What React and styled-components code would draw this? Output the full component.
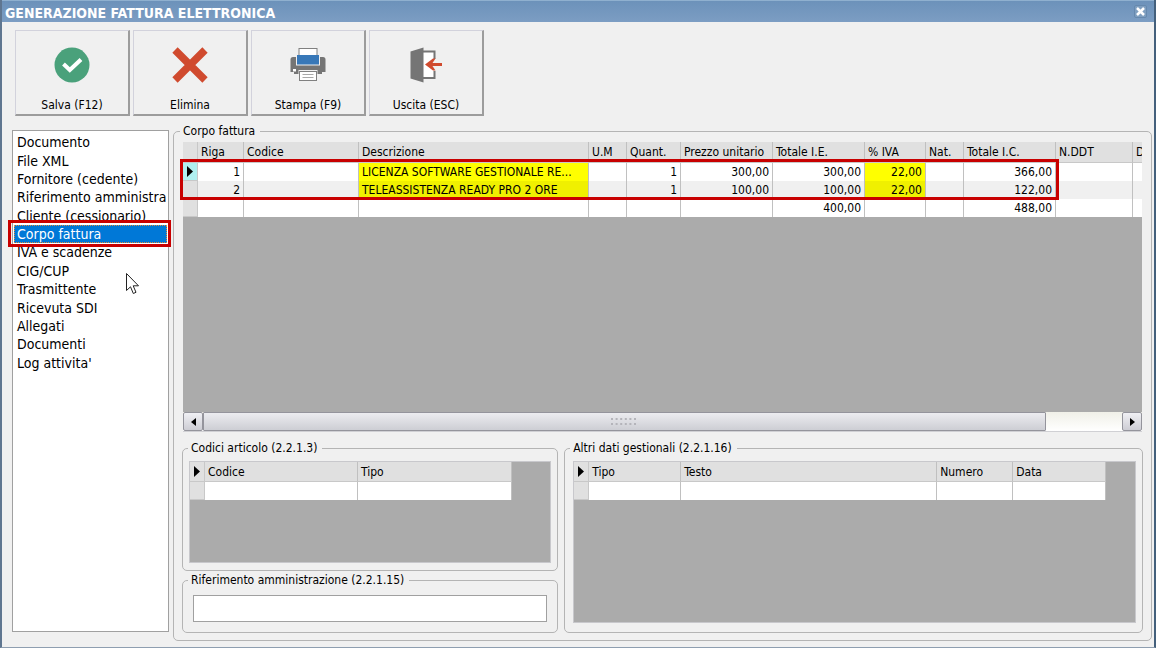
import React, { useState } from "react";
import styled, { createGlobalStyle } from "styled-components";

/* Start page styling */
const GlobalStyle = createGlobalStyle`
  * {
    box-sizing: border-box;
  }

  body {
    margin: 0;
    background-color: #f0f0f0;
    color: #000;
    font-family: "DejaVu Sans Condensed", "Noto Sans", sans-serif;
    font-size: 12px;
    line-height: 18px;
  }

  button,
  input {
    font: inherit;
    color: inherit;
  }
`;

const Window = styled.div`
  display: flex;
  flex-direction: column;
  min-height: 100vh;
  border-left: 2px solid #5f7690;
  border-right: 2px solid #44607c;
  border-bottom: 1px solid #8e9eb0;
`;

const TitleBar = styled.header`
  display: flex;
  align-items: center;
  justify-content: space-between;
  height: 22px;
  padding: 3px 7px 0 3px;
  border-top: 1px solid #8fb0cf;
  background: linear-gradient(#6c92ba, #7c9dc3);
  color: #fff;
`;

const Title = styled.h1`
  margin: 0;
  font-size: 14px;
  line-height: 18px;
  font-weight: bold;
`;

const CloseButton = styled.button`
  display: flex;
  align-items: center;
  justify-content: center;
  width: 13px;
  height: 13px;
  margin-bottom: 4px;
  padding: 0;
  border: 1px solid #6689ae;
  border-radius: 2px;
  background-color: #7f9fc0;
`;

const Toolbar = styled.div`
  display: flex;
  gap: 3px;
  padding: 8px 13px 6px;
`;

const ToolButton = styled.button`
  display: flex;
  flex-direction: column;
  align-items: center;
  gap: 13px;
  width: 115px;
  height: 86px;
  padding: 16px 0 0;
  border: solid;
  border-width: 1px 2px 2px 1px;
  border-color: #d2d2dc #9c9c9c #9c9c9c #d2d2dc;
  background-color: #f0f0f0;
`;

const Content = styled.div`
  flex: 1;
  display: flex;
  gap: 4px;
  padding: 0 2px 6px 10px;
`;

const SideNav = styled.nav`
  flex: none;
  width: 157px;
  margin: 8px 0 9px;
  padding: 2px 1px;
  border: 1px solid #a0a0a0;
  background-color: #fff;
`;

const SideList = styled.ul`
  display: grid;
  grid-template-columns: minmax(0, 1fr);
  grid-auto-rows: 1fr;
  height: 239px;
  margin: 0;
  padding: 0;
  list-style: none;
`;

const SideItem = styled.li`
  position: relative;
`;

const SideButton = styled.button`
  display: block;
  width: 100%;
  height: 100%;
  padding: 0 0 0 2px;
  overflow: hidden;
  border: 1px dotted ${props => (props.$active ? "#e08a3c" : "transparent")};
  background-color: ${props => (props.$active ? "#0078d7" : "transparent")};
  color: ${props => (props.$active ? "#fff" : "#000")};
  font-size: 14px;
  line-height: 16px;
  text-align: left;
  white-space: nowrap;
`;

const ItemHighlight = styled.span`
  position: absolute;
  inset: -5px -4px -4px -6px;
  z-index: 1;
  border: 3px solid #c80000;
  pointer-events: none;
`;

const Group = styled.fieldset`
  display: flex;
  flex-direction: column;
  min-width: 0;
  margin: 0;
  padding: ${props => props.$padding};
  border: 1px solid #b4b4b4;
  border-radius: 5px;
`;

const MainGroup = styled(Group)`
  flex: 1;
`;

const GroupTitle = styled.legend`
  margin-left: ${props => props.$shift || "-3px"};
  padding: 1px 5px 0 3px;
  line-height: 17px;
`;

const GridArea = styled.div`
  position: relative;
  flex: 1;
  display: flex;
  flex-direction: column;
`;

const GridView = styled.div`
  flex: 1;
  min-height: ${props => props.$minHeight || "100px"};
  overflow: hidden;
  border: ${props => (props.$framed ? "1px solid #c8c8cc" : "none")};
  background-color: #ababab;
`;

const Table = styled.table`
  width: ${props => props.$width}px;
  height: ${props => props.$height}px;
  border-collapse: separate;
  border-spacing: 0;
  table-layout: fixed;
`;

const HeadCell = styled.th`
  padding: 1px 0 0 3px;
  border-right: 1px solid #c0c0c0;
  border-bottom: 1px solid #c8c8c8;
  background-color: #e0e0e0;
  font-weight: normal;
  line-height: 17px;
  text-align: left;
  white-space: nowrap;
`;

const Cell = styled.td`
  height: 18px;
  padding: 0 3px;
  overflow: hidden;
  border-right: 1px solid #c0c0c0;
  background-color: ${props => props.$color || "#fff"};
  line-height: 18px;
  text-align: ${props => (props.$number ? "right" : "left")};
  text-overflow: ellipsis;
  white-space: nowrap;
`;

const MarkCell = styled.td`
  padding: 0 0 0 4px;
  border-right: 1px solid #c8c8c8;
  border-bottom: 1px solid #c8c8c8;
  background-color: ${props => (props.$current ? "#b0f0f0" : "#e0e0e0")};
  line-height: 0;
`;

const RowsHighlight = styled.div`
  position: absolute;
  top: 17px;
  left: -3px;
  width: 879px;
  height: 41px;
  border: 3px solid #c80000;
  pointer-events: none;
`;

const ScrollBar = styled.div`
  display: flex;
  height: 20px;
  border-bottom: 1px solid #d0d0d4;
  background: linear-gradient(#f0f0e8, #fff);
`;

const ScrollButton = styled.button`
  display: flex;
  align-items: center;
  justify-content: center;
  width: 20px;
  padding: 0;
  border: 1px solid #94949c;
  border-radius: 2px;
  background: linear-gradient(#f0f0f4, #cdcdd4);
`;

const ScrollThumb = styled.div`
  flex: 11;
  display: flex;
  align-items: center;
  justify-content: center;
  border: 1px solid #94949c;
  border-radius: 1px;
  background: linear-gradient(#ececf0, #cdced4);
`;

const ScrollSpace = styled.div`
  flex: 1;
`;

const Details = styled.div`
  display: grid;
  grid-template-columns: minmax(0, 13fr) minmax(0, 20fr);
  gap: 6px;
  margin: 7px -1px 0;
`;

const DetailsColumn = styled.div`
  display: flex;
  flex-direction: column;
`;

const TextField = styled.input`
  height: 27px;
  padding: 0 4px;
  border: 1px solid #a0a0a0;
  background-color: #fff;
`;

const Pointer = styled.svg`
  position: absolute;
  top: 272px;
  left: 125px;
  pointer-events: none;
`;
/* End page styling */

const sections = [
  "Documento",
  "File XML",
  "Fornitore (cedente)",
  "Riferimento amministrazione",
  "Cliente (cessionario)",
  "Corpo fattura",
  "IVA e scadenze",
  "CIG/CUP",
  "Trasmittente",
  "Ricevuta SDI",
  "Allegati",
  "Documenti",
  "Log attivita'"
];

const invoiceColumns = [
  { title: "Riga", width: 46, number: true },
  { title: "Codice", width: 115 },
  { title: "Descrizione", width: 230, marked: true },
  { title: "U.M", width: 38 },
  { title: "Quant.", width: 54, number: true },
  { title: "Prezzo unitario", width: 92, number: true },
  { title: "Totale I.E.", width: 92, number: true },
  { title: "% IVA", width: 61, number: true, marked: true },
  { title: "Nat.", width: 38 },
  { title: "Totale I.C.", width: 92, number: true },
  { title: "N.DDT", width: 77 },
  { title: "D", width: 77 }
];

const invoiceRows = [
  ["1", "", "LICENZA SOFTWARE GESTIONALE RE...", "", "1", "300,00", "300,00", "22,00", "", "366,00", "", ""],
  ["2", "", "TELEASSISTENZA READY PRO 2 ORE", "", "1", "100,00", "100,00", "22,00", "", "122,00", "", ""]
];

const invoiceTotals = ["", "", "", "", "", "", "400,00", "", "", "488,00", "", ""];

const codeColumns = [
  { title: "Codice", width: 153 },
  { title: "Tipo", width: 154 }
];

const extraColumns = [
  { title: "Tipo", width: 92 },
  { title: "Testo", width: 256 },
  { title: "Numero", width: 76 },
  { title: "Data", width: 93 }
];

const SaveIcon = () => (
  <svg width="36" height="36" viewBox="0 0 36 36">
    <circle cx="18" cy="18" r="17.5" fill="#4aa17b" />
    <path d="M9.5 17 L15.8 23 L27 12.5" fill="none" stroke="#fff" strokeWidth="4" />
  </svg>
);

const DeleteIcon = () => (
  <svg width="36" height="36" viewBox="0 0 36 36">
    <path d="M3 3 L33 33 M33 3 L3 33" stroke="#d04a2e" strokeWidth="7.5" />
  </svg>
);

const PrintIcon = () => (
  <svg width="36" height="36" viewBox="0 0 36 36">
    <path d="M3 10 H33 Q35.500 10 35.500 12.500 V25 H32 V27 H4 V25 H0.500 V12.500 Q0.500 10 3 10 Z" fill="#757575" />
    <rect x="9" y="1.500" width="18" height="12" fill="#fff" stroke="#808080" />
    <rect x="6" y="8" width="24" height="10.500" fill="#f0f0f0" />
    <rect x="7" y="8" width="22" height="9.500" fill="#3878b8" />
    <rect x="3" y="22" width="3" height="2.500" fill="#fff" />
    <rect x="8.500" y="23" width="19" height="11" fill="#f0f0f0" />
    <rect x="9.500" y="24.500" width="17" height="9" fill="#fff" stroke="#808080" />
    <path d="M12.500 27.500 H23.500 M12.500 30.500 H23.500" stroke="#a8a8a8" />
  </svg>
);

const ExitIcon = () => (
  <svg width="36" height="36" viewBox="0 0 36 36">
    <path d="M15 4.500 H26.500 V12 M26.500 24 V31 H15" fill="#fff" stroke="#757575" strokeWidth="2" />
    <rect x="15" y="6" width="10" height="24" fill="#fff" />
    <path d="M2.500 4.500 L15.500 0.500 V35.500 L2.500 31.500 Z" fill="#757575" />
    <path d="M34 17.500 H20" fill="none" stroke="#d04a2e" strokeWidth="3" />
    <path d="M17 17.500 L25 11.500 H27.500 L23.500 17.500 L27.500 23.500 H25 Z" fill="#d04a2e" />
  </svg>
);

const actions = [
  { label: "Salva (F12)", Icon: SaveIcon },
  { label: "Elimina", Icon: DeleteIcon },
  { label: "Stampa (F9)", Icon: PrintIcon },
  { label: "Uscita (ESC)", Icon: ExitIcon }
];

const RowMarker = () => (
  <svg width="6" height="11" viewBox="0 0 6 11">
    <path d="M0 0 L6 5.500 L0 11 Z" fill="#000" />
  </svg>
);

const DetailTable = ({ columns }) => (
  <Table
    $width={columns.reduce((sum, column) => sum + column.width, 15)}
    $height={38}
  >
    <colgroup>
      <col width="15" />
      {columns.map(column => (
        <col key={column.title} width={column.width} />
      ))}
    </colgroup>
    <tbody>
      <tr>
        <MarkCell>
          <RowMarker />
        </MarkCell>
        {columns.map(column => (
          <HeadCell key={column.title} scope="col">
            {column.title}
          </HeadCell>
        ))}
      </tr>
      <tr>
        <MarkCell />
        {columns.map(column => (
          <Cell key={column.title} />
        ))}
      </tr>
    </tbody>
  </Table>
);

const InvoiceTable = () => (
  <Table
    $width={invoiceColumns.reduce((sum, column) => sum + column.width, 15)}
    $height={75}
  >
    <colgroup>
      <col width="15" />
      {invoiceColumns.map(column => (
        <col key={column.title} width={column.width} />
      ))}
    </colgroup>
    <tbody>
      <tr>
        <MarkCell />
        {invoiceColumns.map(column => (
          <HeadCell key={column.title} scope="col">
            {column.title}
          </HeadCell>
        ))}
      </tr>
      {invoiceRows.map((row, idx) => {
        let rowColor = idx % 2 === 0 ? "#fff" : "#f0f0f0";
        let markedColor = idx % 2 === 0 ? "#ff0" : "#f0f000";
        return (
          <tr key={"row-" + idx}>
            <MarkCell $current={idx === 0}>
              {idx === 0 && <RowMarker />}
            </MarkCell>
            {row.map((value, col) => (
              <Cell
                key={invoiceColumns[col].title}
                $number={invoiceColumns[col].number}
                $color={invoiceColumns[col].marked ? markedColor : rowColor}
              >
                {value}
              </Cell>
            ))}
          </tr>
        );
      })}
      <tr>
        <MarkCell />
        {invoiceTotals.map((value, col) => (
          <Cell key={invoiceColumns[col].title} $number>
            {value}
          </Cell>
        ))}
      </tr>
    </tbody>
  </Table>
);

const App = () => {
  const [section, setSection] = useState("Corpo fattura");
  const [reference, setReference] = useState("");

  return (
    <Window>
      <GlobalStyle />
      <TitleBar>
        <Title>GENERAZIONE FATTURA ELETTRONICA</Title>
        <CloseButton aria-label="Chiudi">
          <svg width="9" height="9" viewBox="0 0 9 9">
            <path d="M1 1 L8 8 M8 1 L1 8" stroke="#fff" strokeWidth="2.500" />
          </svg>
        </CloseButton>
      </TitleBar>

      <Toolbar>
        {actions.map(({ label, Icon }) => (
          <ToolButton key={label}>
            <Icon />
            {label}
          </ToolButton>
        ))}
      </Toolbar>

      <Content>
        <SideNav>
          <SideList>
            {sections.map(name => (
              <SideItem key={name}>
                <SideButton
                  $active={name === section}
                  onClick={() => setSection(name)}
                >
                  {name}
                </SideButton>
                {name === section && <ItemHighlight />}
              </SideItem>
            ))}
          </SideList>
        </SideNav>

        <MainGroup $padding="2px 9px 7px">
          <GroupTitle>Corpo fattura</GroupTitle>
          <GridArea>
            <GridView $minHeight="200px">
              <InvoiceTable />
            </GridView>
            <RowsHighlight />
            <ScrollBar>
              <ScrollButton aria-label="Scorri a sinistra">
                <svg width="5" height="8" viewBox="0 0 5 8">
                  <path d="M5 0 L0 4 L5 8 Z" fill="#000" />
                </svg>
              </ScrollButton>
              <ScrollThumb>
                <svg width="26" height="8" viewBox="0 0 26 8">
                  <path d="M0 1 H26 M0 6 H26" stroke="#b4b4ba" strokeWidth="2" strokeDasharray="2 2.600" />
                </svg>
              </ScrollThumb>
              <ScrollSpace />
              <ScrollButton aria-label="Scorri a destra">
                <svg width="5" height="8" viewBox="0 0 5 8">
                  <path d="M0 0 L5 4 L0 8 Z" fill="#000" />
                </svg>
              </ScrollButton>
            </ScrollBar>
          </GridArea>

          <Details>
            <DetailsColumn>
              <Group $padding="4px 6px 7px">
                <GroupTitle $shift="-1px">Codici articolo (2.2.1.3)</GroupTitle>
                <GridView $framed $minHeight="102px">
                  <DetailTable columns={codeColumns} />
                </GridView>
              </Group>
              <Group $padding="6px 10px 10px">
                <GroupTitle $shift="-5px">
                  <label htmlFor="reference">
                    Riferimento amministrazione (2.2.1.15)
                  </label>
                </GroupTitle>
                <TextField
                  id="reference"
                  type="text"
                  value={reference}
                  onChange={event => setReference(event.target.value)}
                />
              </Group>
            </DetailsColumn>
            <Group $padding="4px 6px 9px 8px">
              <GroupTitle>Altri dati gestionali (2.2.1.16)</GroupTitle>
              <GridView $framed>
                <DetailTable columns={extraColumns} />
              </GridView>
            </Group>
          </Details>
        </MainGroup>
      </Content>

      {/* mouse pointer resting over the section list */}
      <Pointer width="15" height="24" viewBox="0 0 15 24">
        <path
          d="M1.500 1.500 V18.500 L5.500 14.800 L8.300 21.500 L11 20.300 L8.200 13.800 H13.500 Z"
          fill="#fff"
          stroke="#222"
        />
      </Pointer>
    </Window>
  );
};

export default App;
